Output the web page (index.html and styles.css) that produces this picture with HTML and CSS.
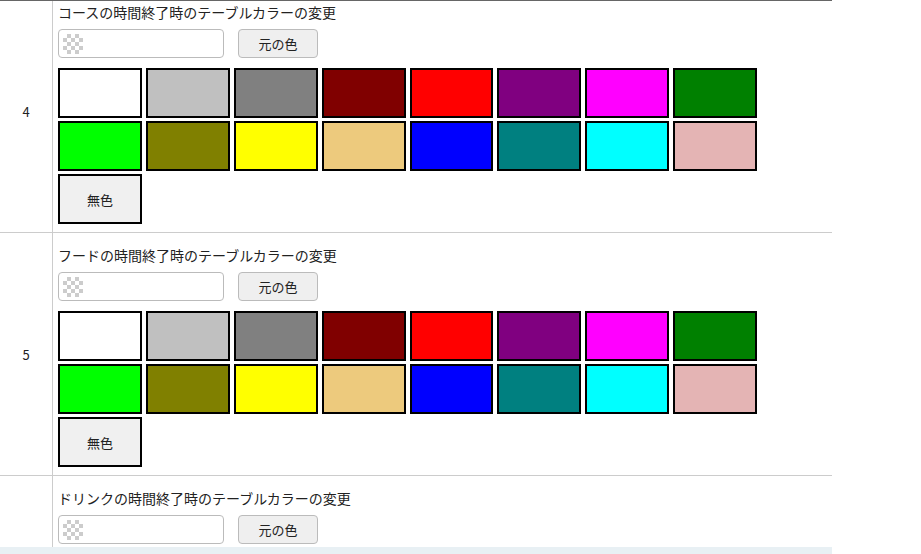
FILE: index.html
```html
<!DOCTYPE html>
<html lang="ja">
<head>
    <meta charset="UTF-8">
    <meta name="viewport" content="width=device-width, initial-scale=1.0">
    <title>テーブルカラー設定</title>
    <link rel="stylesheet" href="styles.css">
</head>
<body>
    <div class="sheet">
        <div class="rows">

            <!-- コース -->
            <div class="row">
                <div class="num">4</div>
                <div class="cell">
                    <div class="label">コースの時間終了時のテーブルカラーの変更</div>
                    <div class="picker">
                        <div class="color-input"><span class="checker"></span></div>
                        <button class="reset-btn">元の色</button>
                    </div>
                    <div class="swatches">
                        <div class="swatch" style="background: #ffffff;"></div>
                        <div class="swatch" style="background: #c0c0c0;"></div>
                        <div class="swatch" style="background: #808080;"></div>
                        <div class="swatch" style="background: #800000;"></div>
                        <div class="swatch" style="background: #ff0000;"></div>
                        <div class="swatch" style="background: #800080;"></div>
                        <div class="swatch" style="background: #ff00ff;"></div>
                        <div class="swatch" style="background: #008000;"></div>
                        <div class="swatch" style="background: #00ff00;"></div>
                        <div class="swatch" style="background: #808000;"></div>
                        <div class="swatch" style="background: #ffff00;"></div>
                        <div class="swatch" style="background: #edca7d;"></div>
                        <div class="swatch" style="background: #0000ff;"></div>
                        <div class="swatch" style="background: #008080;"></div>
                        <div class="swatch" style="background: #00ffff;"></div>
                        <div class="swatch" style="background: #e4b4b4;"></div>
                        <div class="swatch no-color">無色</div>
                    </div>
                </div>
            </div>

            <!-- フード -->
            <div class="row">
                <div class="num">5</div>
                <div class="cell">
                    <div class="label">フードの時間終了時のテーブルカラーの変更</div>
                    <div class="picker">
                        <div class="color-input"><span class="checker"></span></div>
                        <button class="reset-btn">元の色</button>
                    </div>
                    <div class="swatches">
                        <div class="swatch" style="background: #ffffff;"></div>
                        <div class="swatch" style="background: #c0c0c0;"></div>
                        <div class="swatch" style="background: #808080;"></div>
                        <div class="swatch" style="background: #800000;"></div>
                        <div class="swatch" style="background: #ff0000;"></div>
                        <div class="swatch" style="background: #800080;"></div>
                        <div class="swatch" style="background: #ff00ff;"></div>
                        <div class="swatch" style="background: #008000;"></div>
                        <div class="swatch" style="background: #00ff00;"></div>
                        <div class="swatch" style="background: #808000;"></div>
                        <div class="swatch" style="background: #ffff00;"></div>
                        <div class="swatch" style="background: #edca7d;"></div>
                        <div class="swatch" style="background: #0000ff;"></div>
                        <div class="swatch" style="background: #008080;"></div>
                        <div class="swatch" style="background: #00ffff;"></div>
                        <div class="swatch" style="background: #e4b4b4;"></div>
                        <div class="swatch no-color">無色</div>
                    </div>
                </div>
            </div>

            <!-- ドリンク -->
            <div class="row">
                <div class="num">6</div>
                <div class="cell">
                    <div class="label">ドリンクの時間終了時のテーブルカラーの変更</div>
                    <div class="picker">
                        <div class="color-input"><span class="checker"></span></div>
                        <button class="reset-btn">元の色</button>
                    </div>
                    <div class="swatches">
                        <div class="swatch" style="background: #ffffff;"></div>
                        <div class="swatch" style="background: #c0c0c0;"></div>
                        <div class="swatch" style="background: #808080;"></div>
                        <div class="swatch" style="background: #800000;"></div>
                        <div class="swatch" style="background: #ff0000;"></div>
                        <div class="swatch" style="background: #800080;"></div>
                        <div class="swatch" style="background: #ff00ff;"></div>
                        <div class="swatch" style="background: #008000;"></div>
                        <div class="swatch" style="background: #00ff00;"></div>
                        <div class="swatch" style="background: #808000;"></div>
                        <div class="swatch" style="background: #ffff00;"></div>
                        <div class="swatch" style="background: #edca7d;"></div>
                        <div class="swatch" style="background: #0000ff;"></div>
                        <div class="swatch" style="background: #008080;"></div>
                        <div class="swatch" style="background: #00ffff;"></div>
                        <div class="swatch" style="background: #e4b4b4;"></div>
                        <div class="swatch no-color">無色</div>
                    </div>
                </div>
            </div>

        </div>
    </div>
    <div class="footer-bar"></div>
</body>
</html>
```

FILE: styles.css
```css
/* Page */
body {
    margin: 0;
    padding: 0;
    background: #fff;
    color: #222;
    font-family: "Noto Sans CJK JP", "Noto Sans", sans-serif;
    overflow: hidden;
}

/* Table area (scrolled, so the first row is cut at the top) */
.sheet {
    width: 832px;
    height: 546px;
    border-top: 1px solid #666;
    overflow: hidden;
}

.rows {
    margin-top: -11px;
}

.row {
    display: flex;
    border-bottom: 1px solid #ccc;
}

.num {
    width: 52px;
    flex-shrink: 0;
    border-right: 1px solid #ccc;
    display: flex;
    align-items: center;
    justify-content: center;
    font-size: 13px;
}

.cell {
    padding: 12px 5px 8px;
}

/* Title */
.label {
    font-size: 14px;
    line-height: 20px;
    margin-bottom: 7px;
}

/* Color input + reset button */
.picker {
    display: flex;
    gap: 14px;
    margin-bottom: 10px;
}

.color-input {
    width: 166px;
    height: 29px;
    box-sizing: border-box;
    border: 1px solid #bbb;
    border-radius: 4px;
    background: #fff;
    display: flex;
    align-items: center;
    padding-left: 4px;
}

.checker {
    width: 20px;
    height: 20px;
    background-color: #fff;
    background-image:
        linear-gradient(45deg, #ccc 25%, transparent 25%, transparent 75%, #ccc 75%),
        linear-gradient(45deg, #ccc 25%, transparent 25%, transparent 75%, #ccc 75%);
    background-size: 8px 8px;
    background-position: 0 0, 4px 4px;
}

.reset-btn {
    width: 80px;
    height: 29px;
    border: 1px solid #bbb;
    border-radius: 4px;
    background: #efefef;
    color: #222;
    font-family: inherit;
    font-size: 13px;
    padding: 0;
}

/* Swatch grid */
.swatches {
    width: 699px;
    display: grid;
    grid-template-columns: repeat(8, 1fr);
    grid-auto-rows: 50px;
    gap: 3px 4px;
}

.swatch {
    box-sizing: border-box;
    border: 2px solid #000;
}

.no-color {
    background: #f0f0f0;
    display: flex;
    align-items: center;
    justify-content: center;
    font-size: 13px;
}

/* Bottom bar */
.footer-bar {
    width: 832px;
    height: 8px;
    background: #e8f0f4;
}
```
